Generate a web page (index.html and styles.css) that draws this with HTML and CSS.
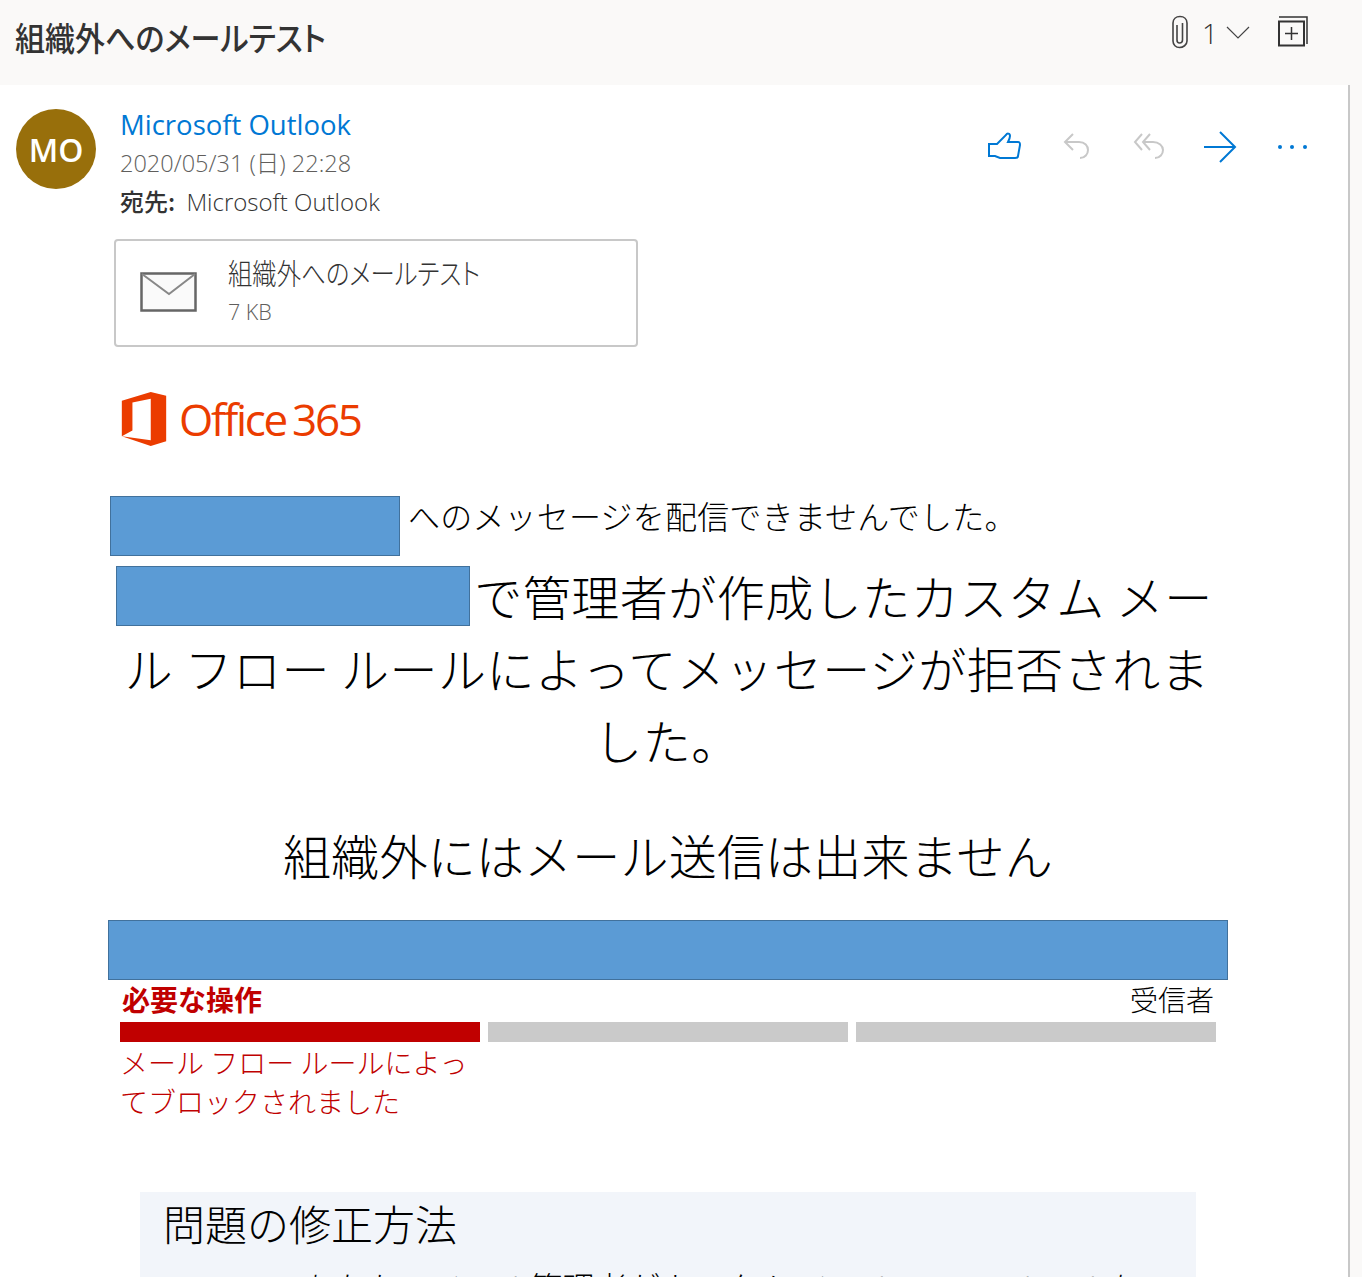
FILE: index.html
```html
<!DOCTYPE html>
<html lang="ja">

<head>
    <meta charset="UTF-8">
    <title>組織外へのメールテスト</title>
    <link rel="stylesheet" href="styles.css">
</head>

<body>
    <header class="subject-bar">
        <h1 class="subject">組織外へのメールテスト</h1>
        <div class="subject-tools">
            <svg class="clip-icon" width="20" height="34" viewBox="0 0 20 34" fill="none" stroke="#444" stroke-width="1.6">
                <path d="M7 10v15c0 2 1 3 2.500 3s3-1 3-3V8"/>
                <path d="M3 10v16c0 4 3 6.500 6.500 6.500S17 30 17 26V8c0-4-3-6.500-7-6.500S3 4 3 8v2"/>
            </svg>
            <span class="attach-count">1</span>
            <svg class="chevron-icon" width="24" height="14" viewBox="0 0 24 14" fill="none" stroke="#444" stroke-width="1.200">
                <path d="M1 1l11 11L23 1"/>
            </svg>
            <svg class="popout-icon" width="32" height="32" viewBox="0 0 32 32" fill="none" stroke="#333">
                <path d="M2 6.500h25v24H2z" stroke-width="2"/>
                <path d="M2 2h28v27" stroke-width="1.500"/>
                <path d="M14.500 12v13M8 18.500h13" stroke-width="1.500"/>
            </svg>
        </div>
    </header>

    <div class="reading-pane">
        <main class="message">
            <div class="sender-row">
                <div class="avatar">MO</div>
                <div class="sender-info">
                    <div class="sender-name">Microsoft Outlook</div>
                    <div class="sent-date">2020/05/31 (日) 22:28</div>
                    <div class="recipient"><b>宛先:</b> Microsoft Outlook</div>
                </div>
                <div class="actions">
                    <svg width="36" height="34" viewBox="0 0 36 34" fill="none" stroke="#0078d4" stroke-width="2">
                        <path d="M3 14h8l9-9c1-2 4-2 4 1 0 2-1 4-2 6h10c2 0 2 1 2 3l-2 11c0 1-1 2-3 2H14l-5-2H3z"/>
                    </svg>
                    <svg width="36" height="34" viewBox="-3 0 36 34" fill="none" stroke="#c8c8c8" stroke-width="2">
                        <path d="M12 4L4 12l8 8M4 12h14c6 0 9 4 9 8s-3 8-8 8"/>
                    </svg>
                    <svg width="36" height="34" viewBox="-3 0 36 34" fill="none" stroke="#c8c8c8" stroke-width="2">
                        <path d="M9 4l-7 8 7 8M17 4l-7 8 7 8M10 12h10c6 0 10 4 10 8s-3 8-8 8"/>
                    </svg>
                    <svg width="36" height="34" viewBox="0 0 36 34" fill="none" stroke="#0078d4" stroke-width="2">
                        <path d="M2 17h30M18 2l15 15-15 15"/>
                    </svg>
                    <svg width="36" height="34" viewBox="0 0 36 34" fill="#0078d4">
                        <circle cx="6" cy="17" r="2"/>
                        <circle cx="18" cy="17" r="2"/>
                        <circle cx="31" cy="17" r="2"/>
                    </svg>
                </div>
            </div>

            <div class="attachment">
                <svg class="mail-icon" width="58" height="40" viewBox="0 0 58 40">
                    <path d="M1.500 1.500h54v37h-54z" fill="#fafafa" stroke="#666" stroke-width="2.500"/>
                    <path d="M2 2l27 20L55 2" fill="none" stroke="#888" stroke-width="2"/>
                </svg>
                <div>
                    <div class="attachment-name">組織外へのメールテスト</div>
                    <div class="attachment-size">7 KB</div>
                </div>
            </div>

            <div class="office-logo">
                <svg width="46" height="54" viewBox="0 0 46 56">
                    <path fill-rule="evenodd" fill="#eb3c00" d="M0 9L30 0l16 4v47l-16 5L0 46zM30 7L11 11v29l-11 6 30 4z"/>
                </svg>
                <span class="office-name">Office 365</span>
            </div>

            <div class="report">
                <div class="undelivered">
                    <span class="redacted redacted-a"></span>
                    <p>へのメッセージを配信できませんでした。</p>
                </div>
                <p class="reason"><span class="redacted redacted-b"></span> で管理者が作成したカスタム メール フロー ルールによってメッセージが拒否されました。</p>
                <p class="custom-note">組織外にはメール送信は出来ません</p>
                <div class="redacted redacted-wide"></div>

                <div class="status-labels">
                    <b class="status-action">必要な操作</b>
                    <span>受信者</span>
                </div>
                <div class="status-bars">
                    <div class="status-bar bar-red"></div>
                    <div class="status-bar"></div>
                    <div class="status-bar"></div>
                </div>
                <div class="status-detail">メール フロー ルールによってブロックされました</div>

                <section class="fix-box">
                    <h2>問題の修正方法</h2>
                    <p>あなたのメール管理者がカスタム メール フロー ルールを作成しました。</p>
                </section>
            </div>
        </main>
    </div>
</body>

</html>
```

FILE: styles.css
```css
body {
    margin: 0;
    height: 1277px;
    overflow: hidden;
    background-color: #faf9f8;
    font-family: "Open Sans", "Noto Sans CJK JP", sans-serif;
    color: #000;
}

.subject-bar {
    display: flex;
    justify-content: space-between;
    height: 85px;
    padding: 0 53px 0 15px;
    box-sizing: border-box;
}

.subject {
    margin: 15px 0 0;
    font-family: "Noto Sans CJK JP", sans-serif;
    font-feature-settings: "palt";
    font-size: 33px;
    font-weight: 500;
    line-height: 44px;
    color: #333;
    transform: scaleX(0.91);
    transform-origin: left;
}

.subject-tools {
    display: flex;
    align-items: flex-start;
    padding-top: 15px;
}

.attach-count {
    margin-left: 12px;
    font-size: 28px;
    font-weight: 300;
    line-height: 36px;
    color: #333;
}

.chevron-icon {
    margin: 11px 0 0 8px;
}

.popout-icon {
    margin-left: 27px;
}

.reading-pane {
    width: 1348px;
    height: 1192px;
    background-color: #fff;
    border-right: 2px solid #c8c8c8;
    overflow: hidden;
}

.sender-row {
    display: flex;
    padding: 24px 38px 0 16px;
}

.avatar {
    width: 80px;
    height: 80px;
    border-radius: 50%;
    background-color: #986f0b;
    color: #fff;
    font-size: 32px;
    font-weight: 600;
    line-height: 82px;
    text-align: center;
}

.sender-info {
    flex: 1;
    margin-left: 24px;
}

.sender-name {
    margin-top: -4px;
    font-size: 27.500px;
    line-height: 40px;
    color: #0078d4;
}

.sent-date {
    font-size: 23.500px;
    font-weight: 300;
    line-height: 36px;
    color: #605e5c;
}

.recipient {
    font-size: 24px;
    font-weight: 300;
    line-height: 40px;
    color: #333;
}

.recipient b {
    font-family: "Noto Sans CJK JP", sans-serif;
    font-weight: 500;
    margin-right: 5px;
}

.actions {
    display: flex;
    gap: 36px;
    padding-top: 21px;
}

.attachment {
    display: flex;
    align-items: center;
    width: 524px;
    height: 108px;
    box-sizing: border-box;
    margin: 17px 0 0 114px;
    padding: 0 0 2px 24px;
    border: 2px solid #c8c8c8;
    border-radius: 4px;
}

.mail-icon {
    margin-right: 30px;
}

.attachment-name {
    font-family: "Noto Sans CJK JP", sans-serif;
    font-feature-settings: "palt";
    font-size: 29px;
    font-weight: 300;
    line-height: 40px;
    color: #333;
    transform: scaleX(0.84);
    transform-origin: left;
}

.attachment-size {
    font-size: 21.500px;
    font-weight: 300;
    line-height: 40px;
    color: #605e5c;
}

.office-logo {
    display: flex;
    align-items: center;
    margin: 45px 0 0 121px;
}

.office-name {
    margin-left: 12px;
    font-family: "Open Sans", sans-serif;
    font-size: 44px;
    line-height: 52px;
    letter-spacing: -2.300px;
    word-spacing: -3px;
    color: #eb3c00;
}

.report {
    width: 1120px;
    margin: 50px 0 0 108px;
    font-family: "Noto Sans CJK JP", sans-serif;
    font-weight: 300;
}

.report p {
    margin: 0;
}

.redacted {
    display: inline-block;
    height: 60px;
    box-sizing: border-box;
    background-color: #5b9bd5;
    border: 1px solid #41719c;
    vertical-align: -10px;
}

.redacted-a {
    width: 290px;
}

.redacted-b {
    width: 354px;
    margin: 0 -7px 0 -5px;
}

.redacted-wide {
    display: block;
    width: 100%;
    margin-top: 30px;
}

.undelivered {
    display: flex;
    gap: 8px;
    margin-left: 2px;
    font-size: 32px;
    line-height: 38px;
    letter-spacing: 0.200px;
    white-space: nowrap;
}

.report .reason {
    margin-top: 3px;
    padding-right: 2px;
    font-size: 48px;
    line-height: 72px;
    letter-spacing: 0.500px;
    text-align: center;
}

.report .custom-note {
    margin-top: 43px;
    font-size: 48px;
    line-height: 72px;
    letter-spacing: 0.200px;
    text-align: center;
}

.status-labels {
    display: flex;
    justify-content: space-between;
    margin-top: -1px;
    padding: 0 14px;
    font-size: 28px;
    line-height: 40px;
}

.status-action {
    font-weight: 700;
    color: #c00000;
}

.status-bars {
    display: flex;
    gap: 8px;
    padding-left: 12px;
    margin-top: 3px;
}

.status-bar {
    width: 360px;
    height: 20px;
    background-color: #cacaca;
}

.bar-red {
    background-color: #c00000;
}

.status-detail {
    width: 360px;
    margin: 1px 0 0 12px;
    font-size: 28px;
    line-height: 39px;
    color: #c00000;
}

.fix-box {
    width: 1056px;
    min-height: 200px;
    box-sizing: border-box;
    margin: 71px 0 0 32px;
    padding: 0 25px;
    background-color: #f2f5fa;
}

.fix-box h2 {
    margin: 0 0 0 -2px;
    font-size: 42px;
    font-weight: 300;
    line-height: 62px;
}

.report .fix-box p {
    margin-top: 8px;
    padding-left: 137px;
    font-size: 32px;
    line-height: 48px;
    letter-spacing: 0.600px;
}
```
